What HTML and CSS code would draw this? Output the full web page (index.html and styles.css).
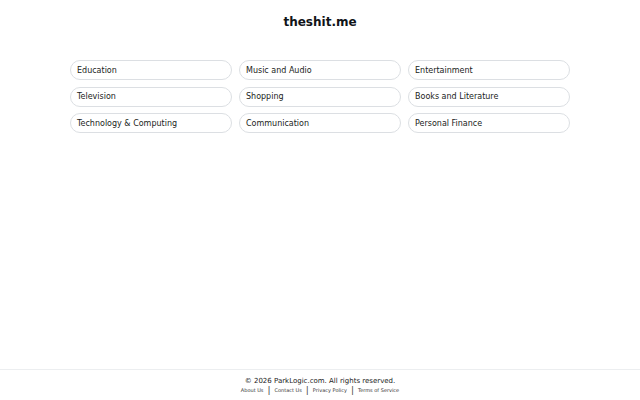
FILE: index.html
```html
<!DOCTYPE html>
<html>
<head>
<meta charset="utf-8">
<link rel="stylesheet" href="styles.css">
</head>
<body>
<div class="page">
  <main class="main">
    <h1 class="title">theshit.me</h1>
    <div class="grid">
      <a class="pill">Education</a>
      <a class="pill">Music and Audio</a>
      <a class="pill">Entertainment</a>
      <a class="pill">Television</a>
      <a class="pill">Shopping</a>
      <a class="pill">Books and Literature</a>
      <a class="pill">Technology &amp; Computing</a>
      <a class="pill">Communication</a>
      <a class="pill">Personal Finance</a>
    </div>
  </main>
  <footer class="footer">
    <div class="copy">© 2026 ParkLogic.com. All rights reserved.</div>
    <div class="links">
      <a class="link">About Us</a><span class="sep">|</span><a class="link">Contact Us</a><span class="sep">|</span><a class="link">Privacy Policy</a><span class="sep">|</span><a class="link">Terms of Service</a>
    </div>
  </footer>
</div>
</body>
</html>
```
FILE: styles.css
```css
html, body {
  margin: 0;
  padding: 0;
  background: #ffffff;
}
body {
  font-family: "DejaVu Sans", sans-serif;
  color: #1f2328;
}
.page {
  height: 400px;
  display: flex;
  flex-direction: column;
}
.main {
  flex: 1;
  display: flex;
  flex-direction: column;
  align-items: center;
}
.title {
  margin: 14px 0 0 0;
  font-size: 12px;
  line-height: 16px;
  font-weight: bold;
  color: #111418;
}
.grid {
  margin-top: 30px;
  width: 500px;
  display: grid;
  grid-template-columns: repeat(3, 1fr);
  column-gap: 7px;
  row-gap: 6.5px;
}
.pill {
  height: 20px;
  box-sizing: border-box;
  border: 1px solid #dcdfe3;
  border-radius: 10px;
  padding: 0 6px;
  display: flex;
  align-items: center;
  font-size: 8px;
  color: #1a1d21;
}
.footer {
  border-top: 1px solid #eceef0;
  height: 31px;
  box-sizing: border-box;
  padding-top: 7px;
  text-align: center;
}
.copy {
  font-size: 7px;
  line-height: 9px;
  color: #222;
}
.links {
  font-size: 5px;
  line-height: 9px;
  color: #333;
}
.sep {
  font-size: 9px;
  margin: 0 4px;
  color: #444;
  vertical-align: -1px;
}
```
